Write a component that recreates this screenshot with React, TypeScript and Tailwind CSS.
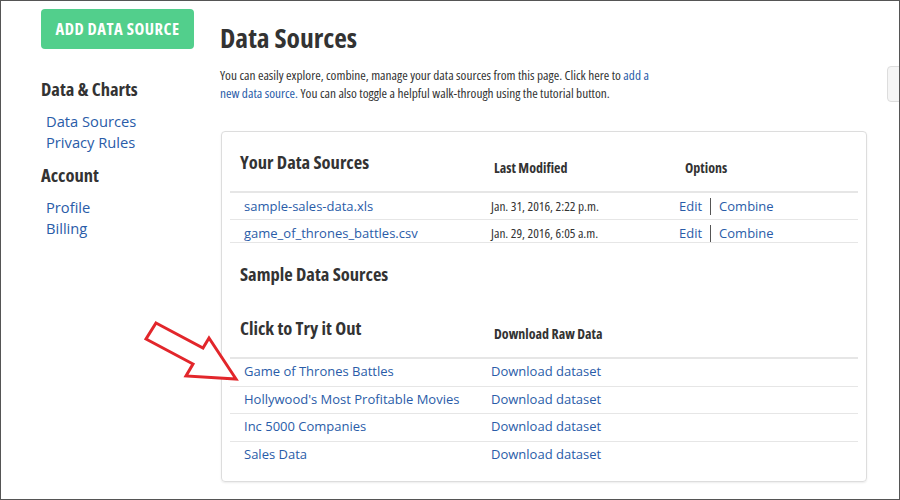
const link = "text-[#2a5ca8] hover:underline cursor-pointer";
const cond = "font-stretch-[75%]";

const yours = [
  { name: "sample-sales-data.xls", date: "Jan. 31, 2016, 2:22 p.m.", h: "h-[27px] pt-[3px]" },
  { name: "game_of_thrones_battles.csv", date: "Jan. 29, 2016, 6:05 a.m.", h: "h-[23px] pt-[3px]" },
];

const samples = [
  "Game of Thrones Battles",
  "Hollywood's Most Profitable Movies",
  "Inc 5000 Companies",
  "Sales Data",
];

export default function App() {
  return (
    <div className="relative w-[900px] h-[500px] overflow-hidden border border-[#555] bg-white text-[#333] font-['Open_Sans','Liberation_Sans',sans-serif]">
      <div className="flex pl-[40px] pt-[8px]">
        {/* Sidebar */}
        <aside className="w-[153px] shrink-0">
          <button
            className={`w-[153px] h-[40px] rounded-[4px] bg-[#52cf8c] text-white font-bold text-[16.5px] tracking-[0.5px] ${cond}`}
          >
            ADD DATA SOURCE
          </button>
          <h4 className={`mt-[28px] text-[18.5px] leading-[24px] font-bold ${cond}`}>Data &amp; Charts</h4>
          <ul className="mt-[10px] pl-[5px] text-[14.7px] leading-[21px]">
            <li><a className={link}>Data Sources</a></li>
            <li><a className={link}>Privacy Rules</a></li>
          </ul>
          <h4 className={`mt-[10px] text-[18.5px] leading-[24px] font-bold ${cond}`}>Account</h4>
          <ul className="mt-[10px] pl-[5px] text-[14.7px] leading-[21px]">
            <li><a className={link}>Profile</a></li>
            <li><a className={link}>Billing</a></li>
          </ul>
        </aside>

        {/* Main */}
        <main className="ml-[26px] w-[647px] shrink-0">
          <h1 className={`mt-[11px] text-[27.5px] leading-[36px] font-bold ${cond}`}>Data Sources</h1>
          <p className={`mt-[10px] text-[13.3px] leading-[18px] ${cond}`}>
            You can easily explore, combine, manage your data sources from this page. Click here to{" "}
            <a className={link}>add a</a>
            <br />
            <a className={link}>new data source.</a> You can also toggle a helpful walk-through using the tutorial button.
          </p>

          <div className="mt-[29px] ml-[1px] h-[351px] rounded-[4px] border border-[#ddd] shadow-[0_1px_2px_rgba(0,0,0,0.08)] px-[8px]">
            {/* Your data sources */}
            <div className="flex h-[61px] border-b-2 border-[#e6e6e6]">
              <h3 className={`w-[255px] pl-[10px] pt-[18px] text-[18.5px] leading-[24px] font-bold ${cond}`}>Your Data Sources</h3>
              <div className={`w-[190px] pl-[9px] pt-[27px] text-[14px] leading-[18px] font-bold ${cond}`}>Last Modified</div>
              <div className={`pl-[10px] pt-[27px] text-[14px] leading-[18px] font-bold ${cond}`}>Options</div>
            </div>
            {yours.map((r) => (
              <div key={r.name} className={`flex border-b border-[#e6e6e6] text-[13px] leading-[20px] ${r.h}`}>
                <div className="w-[255px] pl-[14px]"><a className={link}>{r.name}</a></div>
                <div className={`w-[190px] pl-[6px] text-[13.3px] ${cond}`}>{r.date}</div>
                <div className="pl-[4px] flex items-center h-[20px]">
                  <a className={link}>Edit</a>
                  <span className="mx-[8px] h-[17px] w-px bg-[#555]" />
                  <a className={link}>Combine</a>
                </div>
              </div>
            ))}

            <h3 className={`mt-[19px] pl-[10px] text-[18.5px] leading-[24px] font-bold ${cond}`}>Sample Data Sources</h3>

            <div className="flex h-[73px] border-b-2 border-[#e6e6e6]">
              <h3 className={`w-[255px] pl-[10px] pt-[30px] text-[18.5px] leading-[24px] font-bold ${cond}`}>Click to Try it Out</h3>
              <div className={`pl-[9px] pt-[39px] text-[14px] leading-[18px] font-bold ${cond}`}>Download Raw Data</div>
            </div>
            {samples.map((s, i) => (
              <div
                key={s}
                className={`flex h-[27.5px] pt-[2px] text-[13px] leading-[20px] ${i < samples.length - 1 ? "border-b border-[#e6e6e6]" : ""}`}
              >
                <div className="w-[255px] pl-[14px]"><a className={link}>{s}</a></div>
                <div className="pl-[6px]"><a className={link}>Download dataset</a></div>
              </div>
            ))}
          </div>
        </main>
      </div>

      {/* tutorial toggle peeking from the right edge */}
      <div className="absolute left-[886px] top-[65px] w-[24px] h-[36px] rounded-[4px] border border-[#ddd] bg-[#f5f5f5]" />

      {/* red arrow annotation */}
      <svg className="absolute left-0 top-0 pointer-events-none" width="900" height="500" viewBox="0 0 900 500">
        <polygon
          points="155,322 202,347 208,337 235,378 185,375 192,363 145,338"
          fill="#fff"
          stroke="#e2262b"
          strokeWidth="3"
          strokeLinejoin="miter"
        />
      </svg>
    </div>
  );
}
